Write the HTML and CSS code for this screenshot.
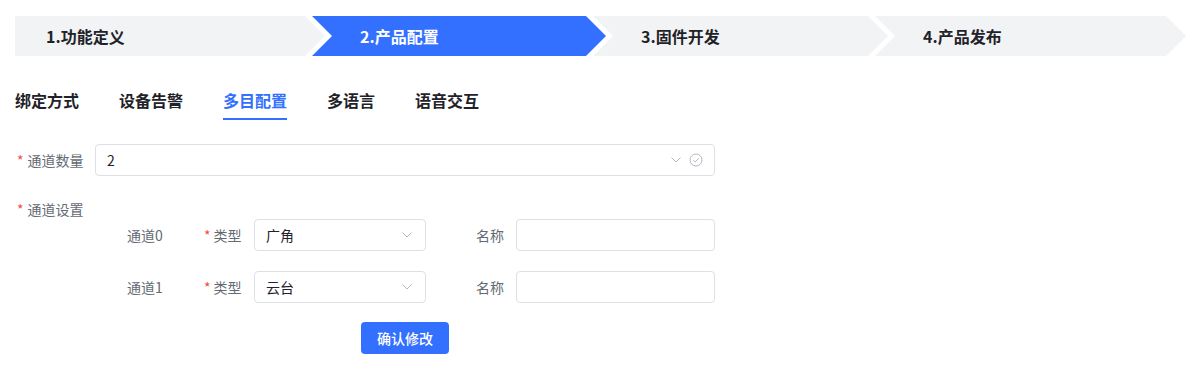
FILE: index.html
```html
<!DOCTYPE html>
<html lang="zh-CN">
<head>
<meta charset="utf-8">
<title>产品配置</title>
<link rel="stylesheet" href="styles.css">
</head>
<body>
<div class="steps">
  <div class="step step-first"><span>1.功能定义</span></div>
  <div class="step step-2 active"><span>2.产品配置</span></div>
  <div class="step step-3"><span>3.固件开发</span></div>
  <div class="step step-last"><span>4.产品发布</span></div>
</div>

<div class="tabs">
  <div class="tab">绑定方式</div>
  <div class="tab">设备告警</div>
  <div class="tab active">多目配置</div>
  <div class="tab">多语言</div>
  <div class="tab">语音交互</div>
</div>

<div class="form">
  <div class="form-item">
    <div class="label"><span class="req">*</span>通道数量</div>
    <div class="select wide">
      <span class="value">2</span>
      <span class="icons">
        <svg class="chev" width="10" height="6" viewBox="0 0 10 6"><path d="M0.5 0.5 L5 5 L9.5 0.5" fill="none" stroke="#b4b8bf" stroke-width="1"/></svg>
        <svg class="check" width="14" height="14" viewBox="0 0 14 14"><circle cx="7" cy="7" r="6" fill="none" stroke="#b4b8bf" stroke-width="1"/><path d="M4.2 7.1 L6.2 9 L9.8 5.2" fill="none" stroke="#b4b8bf" stroke-width="1"/></svg>
      </span>
    </div>
  </div>

  <div class="form-item column">
    <div class="label"><span class="req">*</span>通道设置</div>
    <div class="channels">
      <div class="channel-row">
        <div class="ch-name">通道0</div>
        <div class="sub-label"><span class="req">*</span>类型</div>
        <div class="select small">
          <span class="value">广角</span>
          <svg class="chev" width="10" height="6" viewBox="0 0 10 6"><path d="M0.5 0.5 L5 5 L9.5 0.5" fill="none" stroke="#b4b8bf" stroke-width="1"/></svg>
        </div>
        <div class="name-label">名称</div>
        <div class="input"></div>
      </div>
      <div class="channel-row">
        <div class="ch-name">通道1</div>
        <div class="sub-label"><span class="req">*</span>类型</div>
        <div class="select small">
          <span class="value">云台</span>
          <svg class="chev" width="10" height="6" viewBox="0 0 10 6"><path d="M0.5 0.5 L5 5 L9.5 0.5" fill="none" stroke="#b4b8bf" stroke-width="1"/></svg>
        </div>
        <div class="name-label">名称</div>
        <div class="input"></div>
      </div>
      <div class="actions">
        <button class="btn-primary">确认修改</button>
      </div>
    </div>
  </div>
</div>
</body>
</html>
```

FILE: styles.css
```css
* { box-sizing: border-box; }

body {
  margin: 0;
  background: #ffffff;
  font-family: "Noto Sans CJK SC", "Noto Sans", "Liberation Sans", sans-serif;
  color: #1f2329;
}

/* Steps */
.steps {
  display: flex;
  margin: 16px 0 0 15px;
  height: 40px;
}

.step {
  height: 40px;
  background: #f2f3f5;
  display: flex;
  align-items: center;
  font-size: 16px;
  font-weight: 700;
  color: #1f2329;
  padding-left: 48px;
  margin-left: -13px;
  clip-path: polygon(0 0, calc(100% - 20px) 0, 100% 50%, calc(100% - 20px) 100%, 0 100%, 20px 50%);
}

.step-first {
  width: 310px;
  margin-left: 0;
  padding-left: 31px;
  clip-path: polygon(0 0, calc(100% - 20px) 0, 100% 50%, calc(100% - 20px) 100%, 0 100%);
}

.step-2 { width: 294px; }
.step-3 { width: 295px; }
.step-last { width: 311px; }

.step.active {
  background: #3370ff;
  color: #ffffff;
}

/* Tabs */
.tabs {
  display: flex;
  gap: 40px;
  margin: 32px 0 0 15px;
}

.tab {
  font-size: 16px;
  font-weight: 700;
  line-height: 24px;
  color: #1f2329;
  padding-bottom: 6px;
  border-bottom: 2px solid transparent;
}

.tab.active {
  color: #3370ff;
  border-bottom-color: #3370ff;
}

/* Form */
.form {
  margin: 24px 0 0 15px;
  font-size: 14px;
}

.form-item {
  display: flex;
  align-items: center;
  margin-bottom: 23px;
}

.form-item.column {
  flex-direction: column;
  align-items: flex-start;
}

.label {
  width: 80px;
  color: #646a73;
  line-height: 20px;
  white-space: nowrap;
}

.req {
  color: #f54a45;
  margin: 0 4px 0 2px;
}

.select,
.input {
  height: 32px;
  border: 1px solid #dee0e3;
  border-radius: 4px;
  background: #ffffff;
  display: flex;
  align-items: center;
  justify-content: space-between;
}

.select.wide {
  width: 620px;
  padding: 0 11px 0 11px;
}

.select .value {
  color: #1f2329;
}

.icons {
  display: flex;
  align-items: center;
  gap: 8px;
}

.chev { display: block; }
.check { display: block; }

.channels {
  display: flex;
  flex-direction: column;
  gap: 20px;
  padding-left: 112px;
}

.channel-row {
  display: flex;
  align-items: center;
}

.ch-name {
  width: 77px;
  color: #646a73;
}

.sub-label {
  color: #646a73;
  width: 50px;
  white-space: nowrap;
}

.sub-label .req {
  margin: 0 3px 0 0;
}

.select.small {
  width: 172px;
  padding: 0 13px 0 11px;
}

.name-label {
  color: #646a73;
  margin-left: 50px;
  width: 40px;
}

.input {
  width: 199px;
}

.actions {
  padding-left: 234px;
  margin-top: -1px;
}

.btn-primary {
  width: 88px;
  height: 32px;
  border: none;
  border-radius: 4px;
  background: #3370ff;
  color: #ffffff;
  font-family: inherit;
  font-size: 14px;
  font-weight: 500;
  padding: 0;
}
```
